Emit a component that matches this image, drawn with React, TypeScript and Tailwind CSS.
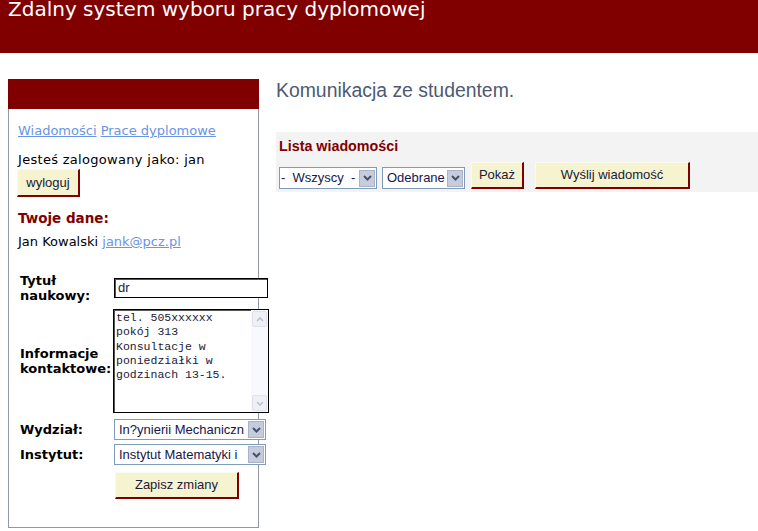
import React from 'react';

function SelectBox({ value, className, textClass }: { value: string; className: string; textClass: string }) {
    return (
        <div className={`flex shrink-0 items-center border border-[#7f9db9] bg-white ${className}`}>
            <span className={`flex-1 overflow-hidden whitespace-pre font-['Liberation_Sans',Arial,sans-serif] text-[13px] leading-[18px] text-[#16164a] ${textClass}`}>{value}</span>
            <span className="mr-[1px] flex h-[17px] w-[16px] shrink-0 items-center justify-center border border-[#a7b2cb] bg-[#c7ccdc]">
                <svg width="9" height="6" viewBox="0 0 9 6">
                    <path d="M1 1l3.5 3.5L8 1" stroke="#46516e" strokeWidth="2" fill="none" />
                </svg>
            </span>
        </div>
    );
}

function YellowButton({ label, className }: { label: string; className: string }) {
    return (
        <button
            className={`flex shrink-0 items-center justify-center border-t border-l border-t-[#fbfaee] border-l-[#fbfaee] border-b-2 border-r-2 border-b-[#800000] border-r-[#800000] bg-[#f5f3d0] font-['Liberation_Sans',Arial,sans-serif] text-[13px] text-[#1a1a3a] ${className}`}
        >
            {label}
        </button>
    );
}

function ScrollArrow({ up }: { up: boolean }) {
    return (
        <div className="flex h-[16px] w-[15px] items-center justify-center rounded-[2px] border border-[#dfe2ea] bg-[#eef0f6]">
            <svg width="8" height="5" viewBox="0 0 8 5">
                <path d={up ? 'M1 4l3-3 3 3' : 'M1 1l3 3 3-3'} stroke="#bcc1cd" strokeWidth="1.6" fill="none" />
            </svg>
        </div>
    );
}

export default function App() {
    return (
        <div className="h-[531px] w-[758px] overflow-hidden bg-white font-['DejaVu_Sans',Verdana,sans-serif]">
            {/* Header */}
            <div className="h-[53px] bg-[#800000] pl-2">
                <h1 className="font-['DejaVu_Sans',Verdana,sans-serif] text-[20px] leading-[18px] text-white">Zdalny system wyboru pracy dyplomowej</h1>
            </div>

            <div className="flex">
                {/* Sidebar */}
                <aside className="ml-2 mt-[26px] w-[251px] shrink-0">
                    <div className="h-[30px] bg-[#800000]" />
                    <div className="h-[419px] border-x border-b border-[#8f97aa] pl-[9px] pt-[14px] text-[13px] text-black">
                        <div className="leading-[16px]">
                            <a className="text-[#6a94e4] underline">Wiadomości</a>{' '}
                            <a className="text-[#6a94e4] underline">Prace dyplomowe</a>
                        </div>
                        <div className="mt-[13px] leading-[16px] tracking-[0.3px]">Jesteś zalogowany jako: jan</div>
                        <YellowButton label="wyloguj" className="mt-[1px] -ml-[1px] h-[28px] w-[63px]" />
                        <div className="mt-[13px] text-[13.5px] font-bold leading-[17px] text-[#800000]">Twoje dane:</div>
                        <div className="mt-[7px] leading-[16px]">
                            Jan Kowalski <a className="text-[#6a94e4] underline">jank@pcz.pl</a>
                        </div>

                        {/* Form */}
                        <div className="mt-[23px] pl-[2px]">
                            <div className="flex items-center">
                                <div className="w-[93px] shrink-0 font-bold leading-[15px]">Tytuł<br />naukowy:</div>
                                <div className="ml-[1px] flex h-[20px] w-[154px] shrink-0 items-center border border-black bg-white pl-[3px] font-['Liberation_Sans',Arial,sans-serif] text-[13px] text-[#16164a] shadow-[inset_1px_1px_0_#555]">dr</div>
                            </div>
                            <div className="mt-[6px] flex items-center">
                                <div className="w-[93px] shrink-0 font-bold leading-[15px]">Informacje<br />kontaktowe:</div>
                                <div className="flex h-[104px] w-[156px] shrink-0 border border-black bg-white shadow-[inset_1px_1px_0_#555]">
                                    <div className="flex-1 whitespace-pre-line pl-[2px] pt-[1px] font-['Liberation_Mono','Courier_New',monospace] text-[11.5px] leading-[14.3px] text-[#1a1a3a]">
                                        {'tel. 505xxxxxx\npokój 313\nKonsultacje w\nponiedziałki w\ngodzinach 13-15.'}
                                    </div>
                                    <div className="flex w-[17px] shrink-0 flex-col items-center justify-between bg-[#f8f9fc] py-[1px]">
                                        <ScrollArrow up />
                                        <ScrollArrow up={false} />
                                    </div>
                                </div>
                            </div>
                            <div className="mt-[6px] flex items-center">
                                <div className="w-[93px] shrink-0 font-bold leading-[15px]">Wydział:</div>
                                <SelectBox value="In?ynierii Mechaniczn" className="ml-[1px] h-[21px] w-[152px]" textClass="pl-[4px]" />
                            </div>
                            <div className="mt-[4px] flex items-center">
                                <div className="w-[93px] shrink-0 font-bold leading-[15px]">Instytut:</div>
                                <SelectBox value="Instytut Matematyki i" className="ml-[1px] h-[21px] w-[152px]" textClass="pl-[4px]" />
                            </div>
                            <div className="mt-[7px] flex">
                                <YellowButton label="Zapisz zmiany" className="ml-[95px] h-[27px] w-[124px]" />
                            </div>
                        </div>
                    </div>
                </aside>

                {/* Main */}
                <main className="ml-[17px] mt-[26px] flex-1">
                    <h2 className="font-['Liberation_Sans',Arial,sans-serif] text-[19.4px] leading-[22px] text-[#4d5a74]">Komunikacja ze studentem.</h2>
                    <div className="mt-[31px] bg-[#f3f3f3] pl-[3px] pt-[6px] pb-[3px]">
                        <div className="font-['Liberation_Sans',Arial,sans-serif] text-[14.3px] font-bold leading-[16px] text-[#800000]">Lista wiadomości</div>
                        <div className="mt-[8px] flex items-end">
                            <SelectBox value={'-  Wszyscy  -'} className="h-[22px] w-[98px]" textClass="pl-[1px]" />
                            <SelectBox value="Odebrane" className="ml-[5px] h-[22px] w-[83px]" textClass="pl-[4px]" />
                            <YellowButton label="Pokaż" className="ml-[6px] h-[27px] w-[53px]" />
                            <YellowButton label="Wyślij wiadomość" className="ml-[11px] h-[27px] w-[155px]" />
                        </div>
                    </div>
                </main>
            </div>
        </div>
    );
}
